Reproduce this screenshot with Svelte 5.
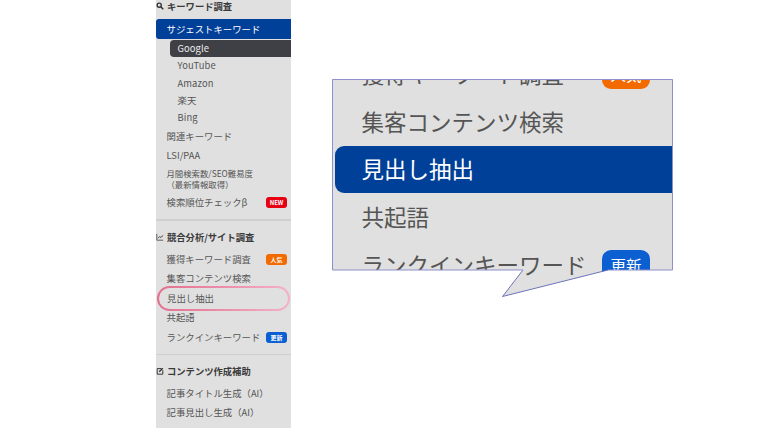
<script>
  const subs = ['YouTube', 'Amazon', '楽天', 'Bing'];
  const zoomRows = [
    { label: '獲得キーワード調査', badge: '人気', tone: 'orange' },
    { label: '集客コンテンツ検索' },
    { label: '見出し抽出', active: true },
    { label: '共起語' },
    { label: 'ランクインキーワード', badge: '更新', tone: 'blue' }
  ];
</script>

<div class="page">
  <nav class="sidebar">
    <h3 class="head first">
      <svg viewBox="0 0 10 10" class="icon"><circle cx="4" cy="4" r="2.6" fill="none" stroke="#333" stroke-width="1.7"/><path d="M6 6l3 3" stroke="#333" stroke-width="2"/></svg>
      キーワード調査
    </h3>
    <div class="row current">サジェストキーワード</div>
    <div class="row sub selected">Google</div>
    {#each subs as s}
      <div class="row sub">{s}</div>
    {/each}
    <div class="row">関連キーワード</div>
    <div class="row">LSI/PAA</div>
    <div class="row small">月間検索数/SEO難易度<br />（最新情報取得）</div>
    <div class="row">検索順位チェックβ<span class="badge red">NEW</span></div>
    <hr />
    <h3 class="head">
      <svg viewBox="0 0 10 10" class="icon"><path d="M1 1v8h8" fill="none" stroke="#444" stroke-width="1"/><path d="M2.5 6.5l2-2 1.5 1L9 3" fill="none" stroke="#333" stroke-width="1.1"/></svg>
      競合分析/サイト調査
    </h3>
    <div class="group">
      <div class="row">獲得キーワード調査<span class="badge orange">人気</span></div>
      <div class="row">集客コンテンツ検索</div>
      <div class="row ring">見出し抽出</div>
      <div class="row">共起語</div>
      <div class="row">ランクインキーワード<span class="badge blue">更新</span></div>
    </div>
    <hr class="second" />
    <h3 class="head">
      <svg viewBox="0 0 10 10" class="icon"><path d="M7 2H1.5v7h7V4" fill="none" stroke="#333" stroke-width="1.2"/><path d="M4 6l4.5-4.5" stroke="#333" stroke-width="1.6"/></svg>
      コンテンツ作成補助
    </h3>
    <div class="group">
      <div class="row">記事タイトル生成（AI）</div>
      <div class="row">記事見出し生成（AI）</div>
    </div>
  </nav>

  <div class="callout">
    <div class="zoom">
      {#each zoomRows as r}
        <div class="zrow" class:zactive={r.active}>
          <span class="zlabel">{r.label}</span>
          {#if r.badge}<span class="zbadge {r.tone}">{r.badge}</span>{/if}
        </div>
      {/each}
    </div>
  </div>
  <svg class="outline" viewBox="0 0 342 220" aria-hidden="true">
    <path d="M191 191L170.5 217.5L276 191" fill="none" stroke="#5f63b4" stroke-width="0.9"/>
    <path d="M191 191H0.5V0.5H340.5V191H276" fill="none" stroke="#8e90cb" stroke-width="1"/>
  </svg>
</div>

<style>
  :global(body) {
    margin: 0;
    background: #fff;
  }
  .page {
    position: relative;
    width: 760px;
    height: 428px;
    overflow: hidden;
    padding-left: 156px;
    box-sizing: border-box;
    font-family: "Noto Sans CJK JP", "Noto Sans", sans-serif;
  }
  .sidebar {
    width: 135px;
    height: 428px;
    background: #e0e0e0;
    overflow: hidden;
    color: #555;
    font-size: 9.4px;
  }
  .head {
    display: flex;
    align-items: center;
    gap: 3px;
    height: 12px;
    margin: 10px 0 0;
    font-size: 9.3px;
    font-weight: 700;
    color: #3a3a3a;
    white-space: nowrap;
  }
  .head.first {
    margin: 0 0 7px;
  }
  .icon {
    width: 8px;
    height: 8px;
    flex: none;
  }
  .row {
    display: flex;
    align-items: center;
    height: 19.3px;
    padding-left: 10.5px;
    padding-right: 4px;
    box-sizing: border-box;
    white-space: nowrap;
    line-height: 11px;
  }
  .current {
    height: 20px;
    margin-bottom: 1px;
    background: #004098;
    color: #fff;
    border-radius: 3px 0 0 3px;
  }
  .sub {
    height: 17.4px;
    margin-left: 14px;
    padding-left: 7.5px;
    letter-spacing: 0.1px;
  }
  .selected {
    height: 17px;
    background: #3f3f46;
    color: #eee;
    border-radius: 4px 0 0 4px;
  }
  .small {
    display: block;
    height: 24px;
    margin: 2.5px 0 1.5px;
    font-size: 8.4px;
  }
  .badge {
    margin-left: auto;
    width: 21px;
    height: 11px;
    border-radius: 3px;
    color: #fff;
    font-size: 6px;
    font-weight: 700;
    line-height: 11px;
    text-align: center;
  }
  .red { background: #e60012; }
  .orange { background: #f26a00; }
  .blue { background: #0b5fd0; }
  hr {
    height: 1.5px;
    margin: 7px 0 0;
    border: 0;
    background: #cfcfcf;
  }
  hr.second {
    margin-top: 7px;
    height: 1px;
  }
  .group {
    margin-top: 6.5px;
    display: flex;
    flex-direction: column;
    gap: 0.1px;
  }
  .ring {
    height: 25px;
    margin: -2.5px 1px;
    padding-left: 8px;
    border: 2px solid transparent;
    border-radius: 13px;
    background:
      linear-gradient(#e0e0e0, #e0e0e0) padding-box,
      linear-gradient(90deg, #e2708f, #ee94af 60%, #f4b2c6) border-box;
  }
  .callout {
    position: absolute;
    left: 332px;
    top: 79px;
    width: 341px;
    height: 218px;
    background: #e0e0e0;
    overflow: hidden;
    clip-path: polygon(0 0, 341px 0, 341px 191px, 276px 191px, 170.5px 217.5px, 191px 191px, 0 191px);
  }
  .zoom {
    margin-top: -28.8px;
    padding-left: 3px;
    color: #555;
    font-size: 22.5px;
  }
  .zrow {
    display: flex;
    align-items: center;
    height: 47.7px;
    padding-left: 26.5px;
    padding-right: 23px;
    white-space: nowrap;
    box-sizing: border-box;
  }
  .zlabel {
    margin-bottom: 2px;
  }
  .zactive {
    background: #004098;
    color: #fff;
    border-radius: 9px 0 0 9px;
  }
  .zbadge {
    margin-left: auto;
    width: 48px;
    height: 30px;
    border-radius: 9px;
    color: #fff;
    font-size: 15.5px;
    line-height: 30px;
    text-align: center;
  }
  .outline {
    position: absolute;
    left: 332px;
    top: 79px;
    width: 342px;
    height: 220px;
  }
</style>
